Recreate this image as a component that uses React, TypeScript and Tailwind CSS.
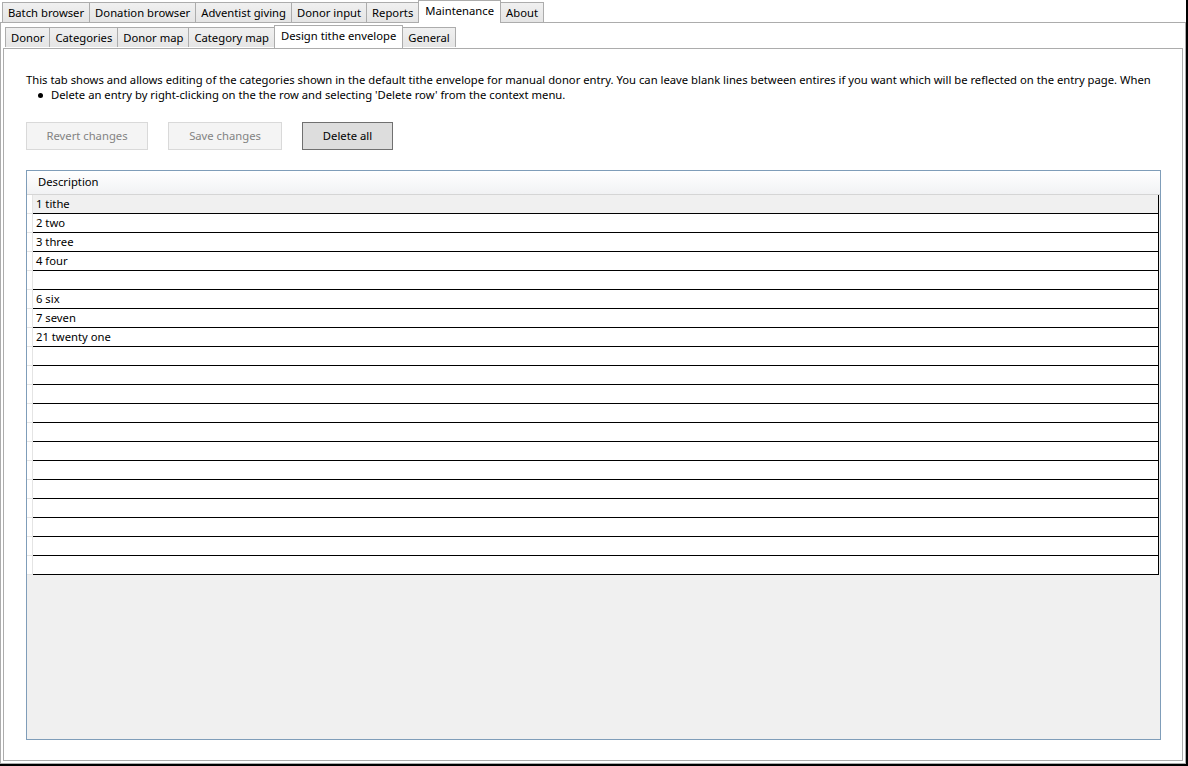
import React from "react";

const font = { fontFamily: '"Noto Sans", "Segoe UI", sans-serif' };

function Tab({ label, selected }: { label: string; selected?: boolean }) {
  return selected ? (
    <div className="relative z-10 -mb-px -ml-px flex h-[23px] items-start border border-b-0 border-[#acacac] bg-white px-[6px] pt-[2px] text-[11.25px] leading-[16px] text-black">
      {label}
    </div>
  ) : (
    <div className="mt-[2px] -ml-px flex h-[20px] items-center border border-b-0 border-[#acacac] bg-gradient-to-b from-[#f0f0f0] to-[#e5e5e5] px-[5px] text-[11.25px] leading-[16px] text-black first:ml-0">
      {label}
    </div>
  );
}

function Btn({ label, disabled, w }: { label: string; disabled?: boolean; w: string }) {
  return (
    <div
      className={
        "flex h-[28px] items-center justify-center border text-[11.25px] " +
        w +
        (disabled
          ? " border-[#d9d9d9] bg-[#f4f4f4] text-[#838383]"
          : " border-[#707070] bg-[#dddddd] text-black")
      }
    >
      {label}
    </div>
  );
}

const rows = ["1 tithe", "2 two", "3 three", "4 four", "", "6 six", "7 seven", "21 twenty one", "", "", "", "", "", "", "", "", "", "", "", ""];

export default function App() {
  return (
    <div className="h-[766px] w-[1188px] overflow-hidden bg-black" style={font}>
      <div className="flex h-[764px] w-[1186px] flex-col bg-white">
        {/* outer tab strip */}
        <div className="flex h-[22px] items-start pl-[2px]">
          <Tab label="Batch browser" />
          <Tab label="Donation browser" />
          <Tab label="Adventist giving" />
          <Tab label="Donor input" />
          <Tab label="Reports" />
          <Tab label="Maintenance" selected />
          <Tab label="About" />
        </div>
        {/* outer panel */}
        <div className="flex flex-1 flex-col border border-[#acacac] bg-white px-[2px] pb-[2px] pt-[2px]">
          {/* inner tab strip */}
          <div className="flex h-[23px] items-start pl-[2px]">
            <Tab label="Donor" />
            <Tab label="Categories" />
            <Tab label="Donor map" />
            <Tab label="Category map" />
            <Tab label="Design tithe envelope" selected />
            <Tab label="General" />
          </div>
          {/* inner panel */}
          <div className="flex flex-1 flex-col border border-[#acacac] bg-white pl-[22px] pr-[21px] pt-[23px] pb-[20px]">
            <div className="whitespace-nowrap text-[11.25px] leading-[16px] text-black">
              This tab shows and allows editing of the categories shown in the default tithe envelope for manual donor entry. You can leave blank lines between entires if you want which will be reflected on the entry page. When
            </div>
            <div className="-mt-px flex items-center whitespace-nowrap text-[11.25px] leading-[16px] text-black">
              <span className="ml-[12px] mr-[8px] inline-block h-[5px] w-[5px] rounded-full bg-black" />
              Delete an entry by right-clicking on the the row and selecting 'Delete row' from the context menu.
            </div>
            <div className="mt-[19px] flex gap-[20px]">
              <Btn label="Revert changes" disabled w="w-[122px]" />
              <Btn label="Save changes" disabled w="w-[114px]" />
              <Btn label="Delete all" w="w-[91px]" />
            </div>
            {/* grid */}
            <div className="mt-[20px] flex flex-1 flex-col border border-[#7f9db9] bg-[#f0f0f0]">
              <div className="flex h-[24px] items-center border-b border-[#d5d5d5] bg-gradient-to-b from-white to-[#f1f2f4] pl-[11px] text-[11.25px] text-black">
                Description
              </div>
              <div className="flex flex-col">
                {rows.map((r, i) => (
                  <div key={i} className="flex h-[19px]">
                    <div className="w-[6px] border-b border-r border-[#e4e4e4] bg-white" />
                    <div
                      className={
                        "flex flex-1 items-center border-b border-r border-black pl-[3px] text-[11.25px] leading-[16px] text-black " +
                        (i === 0 ? "bg-[#f0f0f0]" : "bg-white")
                      }
                    >
                      {r}
                    </div>
                    <div className="w-px" />
                  </div>
                ))}
              </div>
            </div>
          </div>
        </div>
      </div>
    </div>
  );
}
